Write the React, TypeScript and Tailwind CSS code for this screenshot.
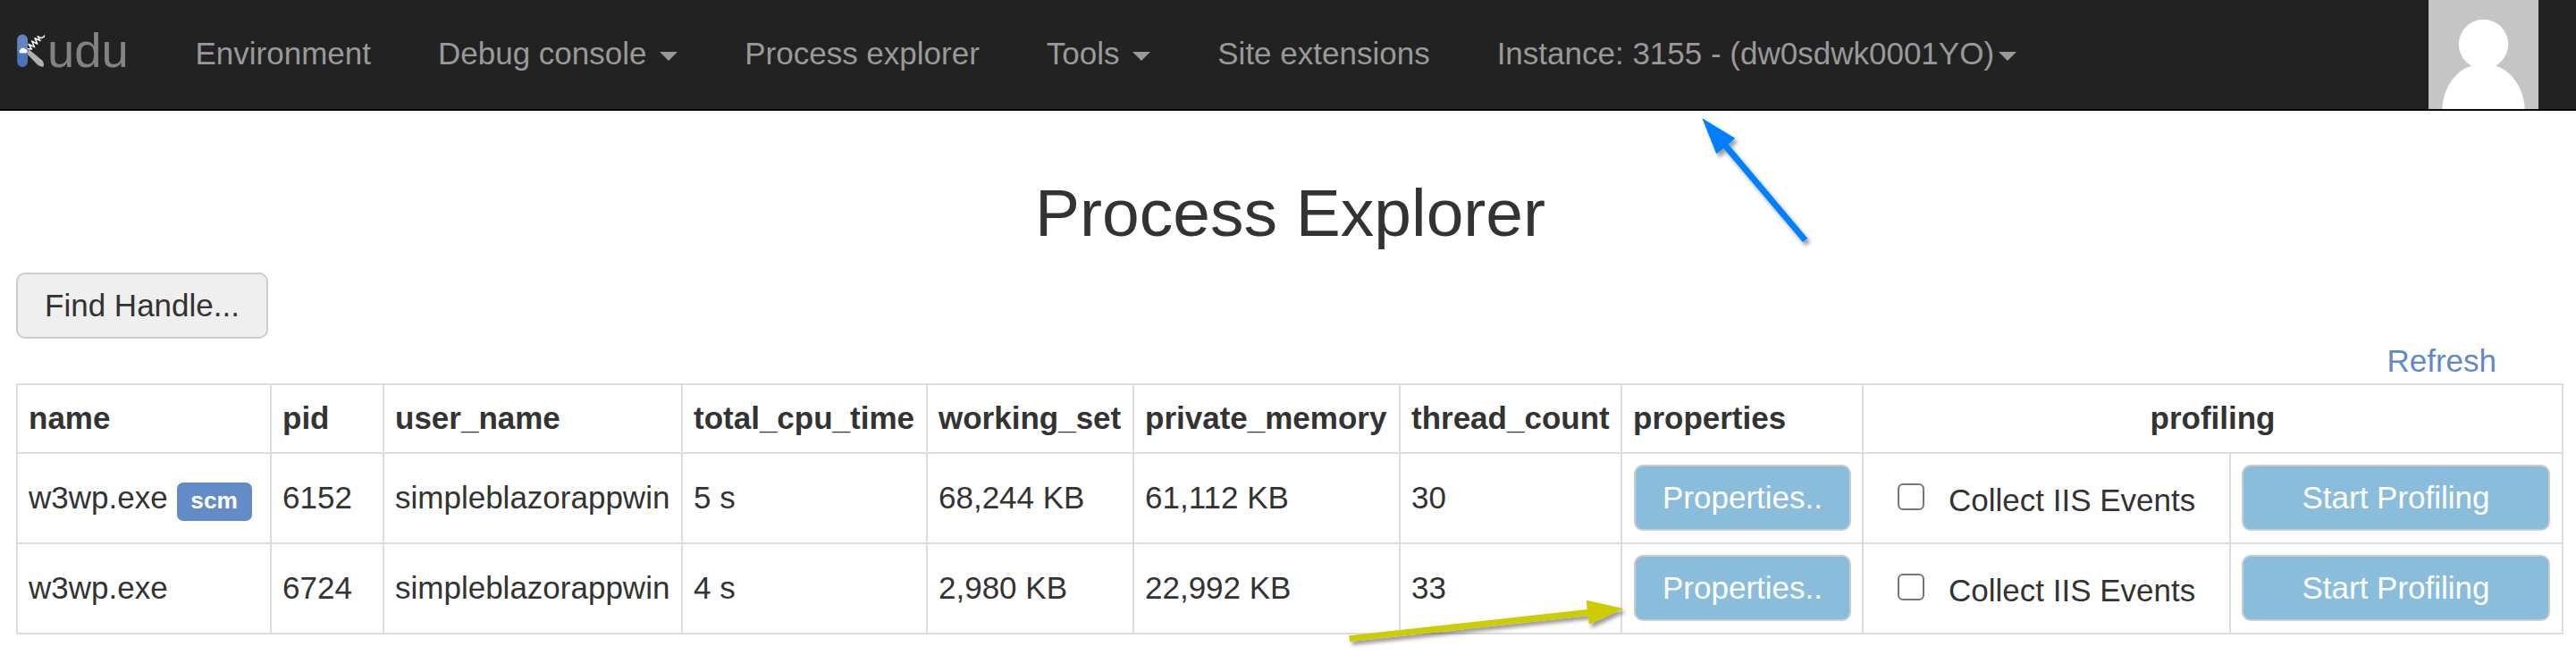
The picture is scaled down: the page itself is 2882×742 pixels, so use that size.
import React from "react";

const rows = [
  { name: "w3wp.exe", scm: true, pid: "6152", user: "simpleblazorappwin", cpu: "5 s", ws: "68,244 KB", pm: "61,112 KB", threads: "30" },
  { name: "w3wp.exe", scm: false, pid: "6724", user: "simpleblazorappwin", cpu: "4 s", ws: "2,980 KB", pm: "22,992 KB", threads: "33" },
];

const columns = ["name", "pid", "user_name", "total_cpu_time", "working_set", "private_memory", "thread_count", "properties"];

function Caret({ className = "" }: { className?: string }) {
  return (
    <svg className={`inline-block h-[10px] w-[20px] align-middle ${className}`} viewBox="0 0 20 10">
      <path d="M0 0H20L10 10Z" fill="#999999" />
    </svg>
  );
}

function Logo() {
  return (
    <div className="flex h-[122px] w-[161px] shrink-0 items-start pl-[19px]">
      <svg className="mt-[38px] h-[38px] w-[33px] shrink-0" viewBox="0 0 33 38">
        <path d="M13 17L28.4 29.8Q30.8 33.4 29.6 36.6Q26 37 23 34.5L11.5 22.5Z" fill="#b1b1b1" />
        <path
          d="M11 16.5L16.5 17L13 11.5L19.6 14.6L16.6 8L22.8 11.2L20 4.6L26 7.6L23.2 2.6L27.3 4.6L30.2 3L30.8 1.4"
          fill="none"
          stroke="#f4f4f4"
          strokeWidth="1.5"
          strokeLinejoin="round"
        />
        <path d="M0.2 6.3a5.9 5.9 0 0 1 11.8 0V19H0.2Z" fill="#6384c4" />
        <path d="M0.2 19H12v12a5.9 5.9 0 0 1-11.8 0Z" fill="#4a73ba" />
        <path d="M4 21.4a1.9 1.9 0 0 1-.2-3.7a3.1 3.1 0 0 1 5.6-.6a2.2 2.2 0 0 1 .7 4.3Z" fill="#ffffff" />
      </svg>
      <span className="mt-[27px] -ml-[2px] pl-[1px] text-[54.5px] leading-[60px] text-[#808285]">
        <span className="pl-[2px]">udu</span>
      </span>
    </div>
  );
}

function Avatar() {
  return (
    <svg className="mr-[42px] ml-auto h-[122px] w-[123px] shrink-0" viewBox="0 0 123 122">
      <rect width="123" height="122" fill="#c5c5c5" />
      <circle cx="61.5" cy="49.5" r="27.7" fill="#ffffff" />
      <path d="M15.3 122C16 101 28 80 48 73.5H75C95 80 107 101 107.7 122Z" fill="#ffffff" />
    </svg>
  );
}

const buttonClass =
  "block h-[74px] rounded-[10px] border-2 border-[#cccccc] bg-[#8abddb] text-center leading-[70px] text-white";
const textCell = "border-2 border-[#dddddd] p-0 pb-[2px] pl-[12px]";

export default function App() {
  return (
    <div className="relative h-[742px] w-[2882px] overflow-hidden bg-white font-['Liberation_Sans',Arial,sans-serif] text-[35px] leading-[50px] text-[#333333]">
      <nav className="flex h-[124px] items-start border-b-2 border-[#080808] bg-[#222222] text-[#999999]">
        <Logo />
        <div className="flex pt-[35px] pl-[20px] whitespace-nowrap">
          <a className="px-[37.5px]">Environment</a>
          <a className="px-[37.5px]">Debug console <Caret className="ml-[5px]" /></a>
          <a className="px-[37.5px]">Process explorer</a>
          <a className="px-[37.5px]">Tools <Caret className="ml-[5px]" /></a>
          <a className="px-[37.5px]">Site extensions</a>
          <a className="px-[37.5px]">Instance: 3155 - (dw0sdwk0001YO)<Caret className="ml-[5px]" /></a>
        </div>
        <Avatar />
      </nav>

      <main className="pr-[14px] pl-[18px]">
        <h1 className="pt-[73px] pl-[1px] text-center text-[75px] leading-[82px]">Process Explorer</h1>
        <button className="mt-[26px] block h-[74px] w-[282px] rounded-[10px] border-2 border-[#cccccc] bg-[#efefef] text-center leading-[70px]">
          Find Handle...
        </button>
        <div className="flex h-[50px] justify-end pr-[75px] text-[#6289c7]">
          <a>Refresh</a>
        </div>
        <table className="w-[2850px] table-fixed border-collapse">
          <colgroup>
            <col className="w-[284px]" />
            <col className="w-[126px]" />
            <col className="w-[334px]" />
            <col className="w-[274px]" />
            <col className="w-[231px]" />
            <col className="w-[298px]" />
            <col className="w-[248px]" />
            <col className="w-[270px]" />
            <col className="w-[411px]" />
            <col className="w-[372px]" />
          </colgroup>
          <thead>
            <tr className="h-[77px]">
              {columns.map((c) => (
                <th key={c} className={`${textCell} text-left font-bold`}>{c}</th>
              ))}
              <th colSpan={2} className="border-2 border-[#dddddd] p-0 pb-[2px] text-center font-bold">profiling</th>
            </tr>
          </thead>
          <tbody>
            {rows.map((r) => (
              <tr key={r.pid} className="h-[101px] whitespace-nowrap">
                <td className={textCell}>
                  <div className="flex items-center">
                    <span>{r.name}</span>
                    {r.scm && (
                      <span className="mt-[8px] -mb-px ml-[10px] h-[43px] w-[84px] rounded-[7px] bg-[#638bc7] text-center text-[26.25px] leading-[41px] font-bold text-white">
                        scm
                      </span>
                    )}
                  </div>
                </td>
                <td className={textCell}>{r.pid}</td>
                <td className={textCell}>{r.user}</td>
                <td className={textCell}>{r.cpu}</td>
                <td className={textCell}>{r.ws}</td>
                <td className={textCell}>{r.pm}</td>
                <td className={textCell}>{r.threads}</td>
                <td className="border-2 border-[#dddddd] p-0 pb-px pl-[13px]">
                  <button className={`${buttonClass} w-[243px]`}>Properties..</button>
                </td>
                <td className="border-2 border-[#dddddd] p-0 pl-[38px]">
                  <label className="flex items-center">
                    <span className="mb-[3px] size-[30px] rounded-[6px] border-[2.5px] border-[#767676] bg-white" />
                    <span className="mt-[5px] ml-[27px]">Collect IIS Events</span>
                  </label>
                </td>
                <td className="border-2 border-[#dddddd] p-0 pb-px pl-[12px]">
                  <button className={`${buttonClass} w-[345px]`}>Start Profiling</button>
                </td>
              </tr>
            ))}
          </tbody>
        </table>
      </main>

      <svg className="pointer-events-none absolute top-0 left-0 h-[742px] w-[2882px]" viewBox="0 0 2882 742">
        <defs>
          <filter id="shadow" x="-20%" y="-20%" width="140%" height="150%">
            <feDropShadow dx="3" dy="4" stdDeviation="2" floodColor="#000000" floodOpacity="0.4" />
          </filter>
        </defs>
        <path
          filter="url(#shadow)"
          fill="#0080ff"
          d="M1904.3 132.3L1941.3 154.7L1933.7 161.5L2022.3 266.7L2017 271L1928.3 166L1920.3 172.3Z"
        />
        <path
          filter="url(#shadow)"
          fill="#cccc00"
          d="M1816.5 681L1774.7 671.7L1775.8 682L1509.4 711.3L1510 718L1776.7 689L1778 698.7Z"
        />
      </svg>
    </div>
  );
}
